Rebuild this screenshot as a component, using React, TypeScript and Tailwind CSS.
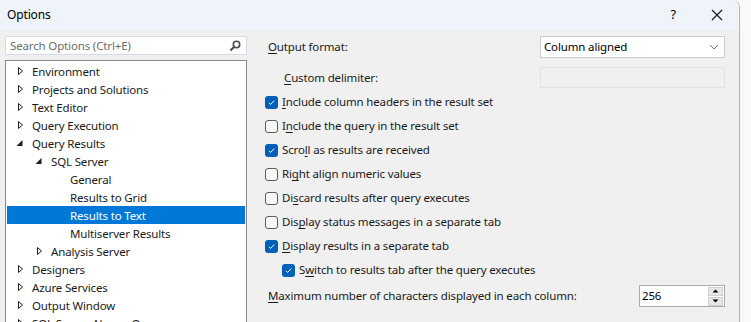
import React from 'react';

type Node = { label: string; level: number; state?: 'open' | 'closed'; selected?: boolean };

const tree: Node[] = [
  { label: 'Environment', level: 0, state: 'closed' },
  { label: 'Projects and Solutions', level: 0, state: 'closed' },
  { label: 'Text Editor', level: 0, state: 'closed' },
  { label: 'Query Execution', level: 0, state: 'closed' },
  { label: 'Query Results', level: 0, state: 'open' },
  { label: 'SQL Server', level: 1, state: 'open' },
  { label: 'General', level: 2 },
  { label: 'Results to Grid', level: 2 },
  { label: 'Results to Text', level: 2, selected: true },
  { label: 'Multiserver Results', level: 2 },
  { label: 'Analysis Server', level: 1, state: 'closed' },
  { label: 'Designers', level: 0, state: 'closed' },
  { label: 'Azure Services', level: 0, state: 'closed' },
  { label: 'Output Window', level: 0, state: 'closed' },
  { label: 'SQL Server Always On', level: 0, state: 'closed' },
];

const indent = ['pl-[6px]', 'pl-[25px]', 'pl-[44px]'];

const Arrow = ({ state }: { state?: 'open' | 'closed' }) => {
  if (state === 'closed')
    return (
      <svg width="14" height="10" viewBox="0 0 14 10" className="shrink-0">
        <path d="M5.5 1.5 L9.5 5 L5.5 8.5 Z" fill="none" stroke="#1e1e1e" strokeWidth="1" />
      </svg>
    );
  if (state === 'open')
    return (
      <svg width="14" height="10" viewBox="0 0 14 10" className="shrink-0">
        <path d="M9.5 2 L9.5 8 L3.5 8 Z" fill="#1e1e1e" />
      </svg>
    );
  return <span className="w-[14px] shrink-0" />;
};

const Check = ({ checked }: { checked?: boolean }) =>
  checked ? (
    <span className="w-[13px] h-[13px] rounded-[3px] bg-[#005fb8] flex items-center justify-center shrink-0">
      <svg width="9" height="9" viewBox="0 0 9 9">
        <path d="M1.8 4.8 L3.6 6.4 L7.2 2.6" fill="none" stroke="#ffffff" strokeWidth="1" />
      </svg>
    </span>
  ) : (
    <span className="w-[13px] h-[13px] rounded-[3px] border border-[#5d5d5d] bg-[#f8f8f8] shrink-0" />
  );

const CheckRow = ({ checked, pre, key1, post, sub }: { checked?: boolean; pre: string; key1: string; post: string; sub?: boolean }) => (
  <div className={`h-[24px] flex items-center gap-[4px] ${sub ? 'pl-[17px]' : ''}`}>
    <Check checked={checked} />
    <span>
      {pre}
      <span className="underline underline-offset-2">{key1}</span>
      {post}
    </span>
  </div>
);

export default function App() {
  return (
    <div className="w-[751px] h-[322px] bg-[#f9f9f9] overflow-hidden text-[11.5px] tracking-[-0.15px] text-[#1a1a1a]" style={{ fontFamily: '"Segoe UI", "Noto Sans", sans-serif' }}>
      <div className="w-[740px] h-[322px] bg-[#f0f0f0] border-r border-[#b5b5b5] rounded-tr-[8px] overflow-hidden flex flex-col">
        {/* Title bar */}
        <div className="h-[30px] bg-[#eef4f9] flex items-center pl-[7px] shrink-0">
          <span className="text-[12px] text-black">Options</span>
          <span className="ml-auto mr-[35px] text-[13px] text-black">?</span>
          <svg width="12" height="12" viewBox="0 0 12 12" className="mr-[16px]">
            <path d="M1 1 L11 11 M11 1 L1 11" stroke="#1a1a1a" strokeWidth="1.2" />
          </svg>
        </div>

        <div className="flex flex-1 min-h-0">
          {/* Left: search + tree */}
          <div className="w-[242px] ml-[5px] pt-[6px] flex flex-col shrink-0">
            <div className="h-[21px] bg-white border border-[#d5dae6] flex items-center pl-[4px] pr-[5px]">
              <span className="text-[#6d6d6d]">Search Options (Ctrl+E)</span>
              <svg width="12" height="12" viewBox="0 0 12 12" className="ml-auto">
                <circle cx="7.5" cy="4.5" r="3.2" fill="none" stroke="#4a4a4a" strokeWidth="1.6" />
                <path d="M5.2 6.8 L1.5 10.5" stroke="#4a4a4a" strokeWidth="2" />
              </svg>
            </div>
            <div className="mt-[5px] flex-1 bg-white border border-[#828790] pt-[1px] pl-[1px] pr-[1px]">
              {tree.map((n) => (
                <div
                  key={n.label}
                  className={`h-[18px] flex items-center ${indent[n.level]} ${n.selected ? 'bg-[#0078d7] text-white' : ''}`}
                >
                  <Arrow state={n.state} />
                  <span className="ml-[5px] whitespace-nowrap">{n.label}</span>
                </div>
              ))}
            </div>
          </div>

          {/* Right: settings */}
          <div className="flex-1 pl-[18px] pr-[14px] pt-[6px] flex flex-col">
            <div className="h-[22px] flex items-center">
              <span className="pl-[3px]">
                <span className="underline underline-offset-2">O</span>utput format:
              </span>
              <div className="ml-auto w-[185px] h-[22px] bg-white border border-[#cccccc] flex items-center pl-[3px] pr-[5px]">
                <span className="text-black">Column aligned</span>
                <svg width="10" height="6" viewBox="0 0 10 6" className="ml-auto">
                  <path d="M1 1 L5 5 L9 1" fill="none" stroke="#777777" strokeWidth="1" />
                </svg>
              </div>
            </div>
            <div className="mt-[9px] h-[21px] flex items-center">
              <span className="pl-[19px]">
                <span className="underline underline-offset-2">C</span>ustom delimiter:
              </span>
              <div className="ml-auto w-[185px] h-[21px] bg-[#f0f0f0] border border-[#e3e3e3]" />
            </div>
            <div className="mt-[2px]">
              <CheckRow checked pre="" key1="I" post="nclude column headers in the result set" />
              <CheckRow pre="I" key1="n" post="clude the query in the result set" />
              <CheckRow checked pre="Scro" key1="l" post="l as results are received" />
              <CheckRow pre="Ri" key1="g" post="ht align numeric values" />
              <CheckRow pre="Di" key1="s" post="card results after query executes" />
              <CheckRow pre="Dis" key1="p" post="lay status messages in a separate tab" />
              <CheckRow checked pre="" key1="D" post="isplay results in a separate tab" />
              <CheckRow checked sub pre="S" key1="w" post="itch to results tab after the query executes" />
            </div>
            <div className="mt-[3px] h-[22px] flex items-center">
              <span className="pl-[3px]">
                <span className="underline underline-offset-2">M</span>aximum number of characters displayed in each column:
              </span>
              <div className="ml-auto w-[86px] h-[22px] bg-white border border-[#aaaaaa] flex items-center pl-[2px] pr-[1px]">
                <span className="text-black">256</span>
                <div className="ml-auto flex flex-col gap-[1px]">
                  <div className="w-[15px] h-[9px] bg-[#e6e6e6] border border-[#cfcfcf] flex items-center justify-center">
                    <svg width="7" height="4" viewBox="0 0 7 4"><path d="M0.5 3.5 L3.5 0.5 L6.5 3.5 Z" fill="#000" /></svg>
                  </div>
                  <div className="w-[15px] h-[9px] bg-[#e6e6e6] border border-[#cfcfcf] flex items-center justify-center">
                    <svg width="7" height="4" viewBox="0 0 7 4"><path d="M0.5 0.5 L3.5 3.5 L6.5 0.5 Z" fill="#000" /></svg>
                  </div>
                </div>
              </div>
            </div>
          </div>
        </div>
      </div>
    </div>
  );
}
